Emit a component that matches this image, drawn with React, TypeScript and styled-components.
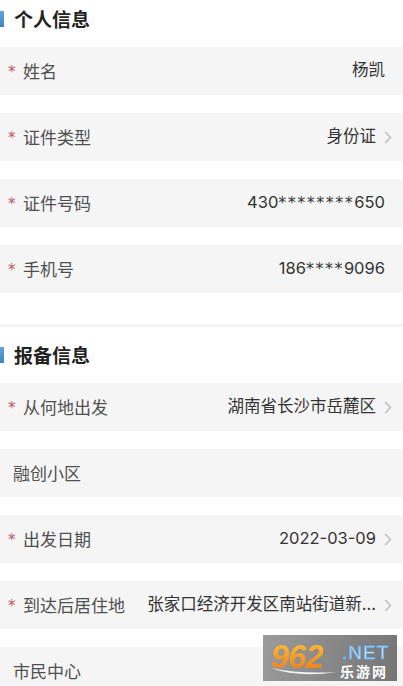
import React from "react";
import styled, { createGlobalStyle } from "styled-components";

const Global = createGlobalStyle`
  html, body { margin: 0; padding: 0; background: #fff; }
  body { font-family: "Noto Sans CJK SC", "Noto Sans", sans-serif; overflow: hidden; }
`;

const Page = styled.div`
  width: 403px;
  height: 686px;
  overflow: hidden;
  position: relative;
  background: #fff;
`;

const Inner = styled.div`
  margin-top: -9px;
  display: flex;
  flex-direction: column;
`;

const Section = styled.section<{ $last?: boolean }>`
  display: flex;
  flex-direction: column;
  padding-bottom: ${(p) => (p.$last ? 0 : 31)}px;
  border-bottom: ${(p) => (p.$last ? "none" : "3px solid #f3f3f3")};
`;

const Header = styled.div`
  height: 56px;
  display: flex;
  align-items: center;
  gap: 10px;
`;

const Bar = styled.span`
  width: 4px;
  height: 16px;
  background: linear-gradient(180deg, #64a3da, #3f83c4);
`;

const HeaderTitle = styled.h2`
  margin: 0 0 2px;
  font-size: 19px;
  font-weight: 700;
  color: #222;
  font-family: "Noto Sans CJK SC", sans-serif;
  line-height: 1;
`;

const List = styled.div`
  display: flex;
  flex-direction: column;
  gap: 18px;
`;

const Row = styled.div<{ $arrow?: boolean; $plain?: boolean }>`
  height: 48px;
  background: #f5f5f5;
  display: flex;
  align-items: center;
  padding-left: ${(p) => (p.$plain ? 13 : 8)}px;
  padding-right: ${(p) => (p.$arrow ? 11 : 18)}px;
  box-sizing: border-box;
  font-size: 17px;
`;

const Star = styled.span`
  width: 15px;
  flex: none;
  color: #c4545e;
  font-family: "DejaVu Sans", sans-serif;
  font-size: 15px;
  line-height: 1;
  padding-top: 3px;
`;

const Label = styled.span`
  color: #505050;
  flex: none;
  line-height: 1;
  margin-bottom: 2px;
`;

const Value = styled.span`
  margin-left: auto;
  color: #333;
  white-space: nowrap;
  font-family: "Inter", "Noto Sans CJK SC", sans-serif;
  font-size: 16.5px;
  line-height: 1;
  margin-bottom: 1px;
`;

const Mask = styled.span`
  font-family: "DejaVu Sans", sans-serif;
  font-size: 16px;
  letter-spacing: 1.5px;
`;

const Chevron = styled.svg`
  margin-left: 8px;
  flex: none;
`;

const Watermark = styled.div`
  position: absolute;
  left: 263px;
  top: 635px;
  width: 134px;
  height: 46px;
  background: linear-gradient(100deg, rgba(150, 150, 150, 0.95), rgba(110, 110, 110, 0.95));
  overflow: hidden;
`;

const WmNum = styled.span`
  position: absolute;
  left: 8px;
  top: 5px;
  font-family: "Liberation Sans", sans-serif;
  font-weight: 700;
  font-style: italic;
  font-size: 33px;
  line-height: 1;
  letter-spacing: -1px;
  background: linear-gradient(180deg, #ffc23a, #f07a12);
  -webkit-background-clip: text;
  background-clip: text;
  -webkit-text-fill-color: transparent;
`;

const WmNet = styled.span`
  position: absolute;
  left: 79px;
  top: 8px;
  font-family: "Liberation Sans", sans-serif;
  font-size: 19px;
  line-height: 1;
  color: #eef7ff;
  -webkit-text-stroke: 0.8px #5aa7e6;
  letter-spacing: 1px;
`;

const WmCn = styled.span`
  position: absolute;
  left: 77px;
  top: 29px;
  font-family: "Noto Sans CJK SC", sans-serif;
  font-size: 14px;
  font-weight: 700;
  color: #fff;
  letter-spacing: 2px;
  line-height: 1;
`;

const Swoosh = styled.svg`
  position: absolute;
  left: 6px;
  top: 30px;
`;

type Item = { label: string; value?: React.ReactNode; req?: boolean; arrow?: boolean; plain?: boolean };

const personal: Item[] = [
  { label: "姓名", value: "杨凯", req: true },
  { label: "证件类型", value: "身份证", req: true, arrow: true },
  { label: "证件号码", value: <>430<Mask>********</Mask>650</>, req: true },
  { label: "手机号", value: <>186<Mask>****</Mask>9096</>, req: true },
];

const report: Item[] = [
  { label: "从何地出发", value: "湖南省长沙市岳麓区", req: true, arrow: true },
  { label: "融创小区", plain: true },
  { label: "出发日期", value: "2022-03-09", req: true, arrow: true },
  { label: "到达后居住地", value: "张家口经济开发区南站街道新...", req: true, arrow: true },
  { label: "市民中心", plain: true },
];

const Arrow = () => (
  <Chevron width="8" height="13" viewBox="0 0 8 13">
    <polyline points="1.2,1 6.5,6.5 1.2,12" fill="none" stroke="#bdbdbd" strokeWidth="1.5" />
  </Chevron>
);

const Field = ({ item }: { item: Item }) => (
  <Row $arrow={item.arrow} $plain={item.plain}>
    {item.req && <Star>*</Star>}
    <Label>{item.label}</Label>
    {item.value && <Value>{item.value}</Value>}
    {item.arrow && <Arrow />}
  </Row>
);

export default function App() {
  return (
    <Page>
      <Global />
      <Inner>
        <Section>
          <Header>
            <Bar />
            <HeaderTitle>个人信息</HeaderTitle>
          </Header>
          <List>
            {personal.map((it) => (
              <Field key={it.label} item={it} />
            ))}
          </List>
        </Section>
        <Section $last>
          <Header>
            <Bar />
            <HeaderTitle>报备信息</HeaderTitle>
          </Header>
          <List>
            {report.map((it) => (
              <Field key={it.label} item={it} />
            ))}
          </List>
        </Section>
      </Inner>
      <Watermark>
        <WmNum>962</WmNum>
        <WmNet>.NET</WmNet>
        <Swoosh width="70" height="14" viewBox="0 0 70 14">
          <path d="M2 3 Q30 13 68 7 Q30 9 2 3 Z" fill="#ffffff" opacity="0.9" />
        </Swoosh>
        <WmCn>乐游网</WmCn>
      </Watermark>
    </Page>
  );
}
